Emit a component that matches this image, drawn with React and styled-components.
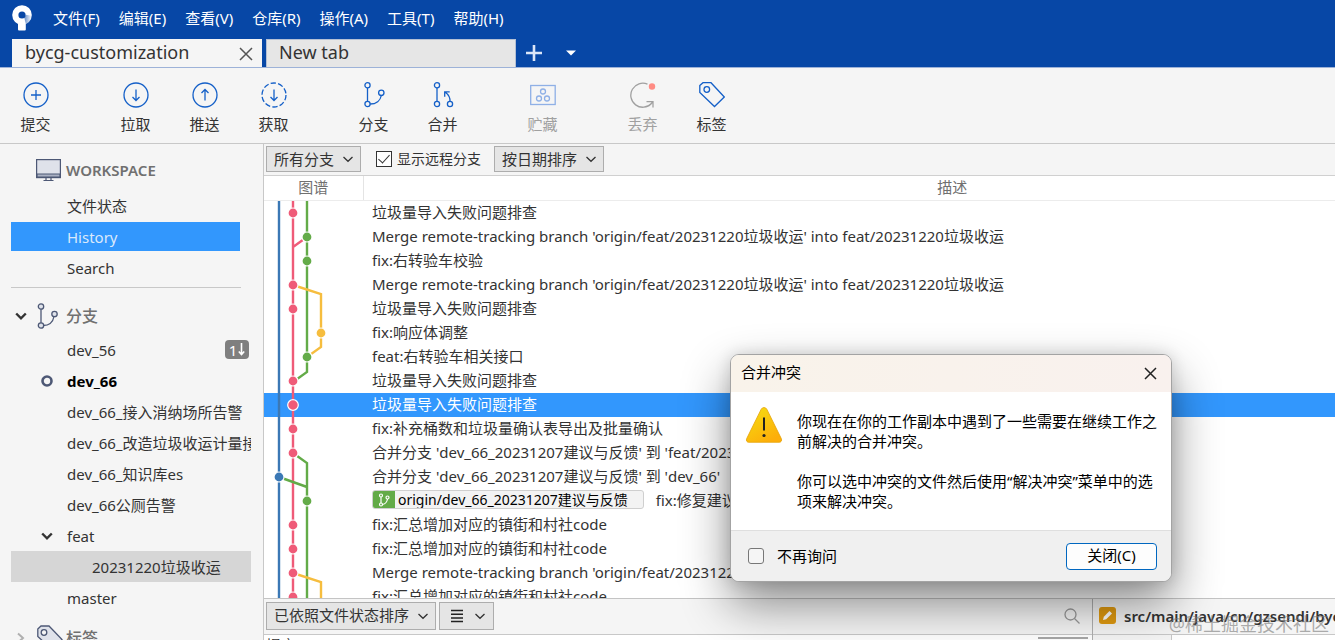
import React from "react";
import styled, { createGlobalStyle, css } from "styled-components";

const GlobalStyle = createGlobalStyle`
  *, *::before, *::after { box-sizing: border-box; }
  body {
    margin: 0;
    background: #f5f5f5;
    color: #333;
    font: 15px/24px "Noto Sans", "Noto Sans CJK SC", sans-serif;
  }
  button, select, input {
    margin: 0;
    font: inherit;
    color: inherit;
  }
  svg { display: block; flex: none; }
`;

const App = styled.div`
  display: flex;
  flex-direction: column;
  height: 100vh;
  overflow: hidden;
  position: relative;
`;

/* ---------- title bar ---------- */

const TitleBar = styled.header`
  flex: none;
  background: #0747a6;
  border-bottom: 1px solid #9db2d8;
`;

const MenuBar = styled.nav`
  display: flex;
  align-items: center;
  height: 36px;
  margin-bottom: 3px;
  padding-left: 12px;
`;

const MenuItems = styled.div`
  display: flex;
  gap: 19px;
  margin-left: 21px;
`;

const PlainButton = styled.button`
  display: flex;
  align-items: center;
  padding: 0;
  border: 0;
  background: none;
  white-space: nowrap;
`;

const MenuButton = styled(PlainButton)`
  color: #fff;
`;

const TabStrip = styled.div`
  display: flex;
  align-items: center;
  gap: 4px;
  height: 28px;
  padding-left: 12px;
`;

const Tab = styled.div`
  display: flex;
  align-items: center;
  justify-content: space-between;
  width: 250px;
  height: 28px;
  padding: 0 8px 0 12px;
  font-size: 18px;
  background: ${(p) => (p.$active ? "#f5f5f5" : "#e6e6e6")};
  border: 1px solid ${(p) => (p.$active ? "#f5f5f5" : "#b4c0d4")};
  border-bottom: 0;
`;

const TabName = styled(PlainButton)`
  padding-bottom: 4px;
`;

const NewTabTools = styled.div`
  display: flex;
  align-items: center;
  gap: 23px;
  margin-left: 5px;
`;

/* ---------- toolbar ---------- */

const ToolBar = styled.div`
  flex: none;
  display: flex;
  gap: 31px;
  height: 76px;
  padding: 12px 0 0 1px;
  border-bottom: 1px solid #c8c8c8;
`;

const ToolGroup = styled.div`
  display: flex;
`;

const Tool = styled(PlainButton)`
  flex-direction: column;
  width: 69px;
  height: 60px;
  gap: 2px;
  color: ${(p) => (p.disabled ? "#a0a0a0" : "#333")};
`;

/* ---------- sidebar ---------- */

const Workspace = styled.div`
  flex: 1;
  display: flex;
  min-height: 0;
`;

const SideBar = styled.aside`
  flex: none;
  width: 264px;
  padding: 6px 12px 0 11px;
  border-right: 1px solid #c8c8c8;
  overflow: hidden;
`;

const SideHeading = styled.h2`
  display: flex;
  align-items: center;
  height: 40px;
  margin: ${(p) => (p.$spaced ? "3px" : "0")} 0 0;
  padding-top: ${(p) => (p.$section ? "3px" : "0")};
  font-size: ${(p) => (p.$section ? "16px" : "15px")};
  font-weight: ${(p) => (p.$section ? 500 : 600)};
  color: #707070;
`;

const HeadToggle = styled.span`
  display: flex;
  width: 26px;
  padding-left: 4px;
`;

const HeadIcon = styled.span`
  display: flex;
  width: ${(p) => (p.$wide ? "55px" : "29px")};
  padding-left: ${(p) => (p.$wide ? "25px" : "0")};
`;

const SideRow = styled.a`
  display: flex;
  align-items: center;
  height: 31px;
  color: ${(p) => (p.$current ? "#000" : "#333")};
  font-weight: ${(p) => (p.$current ? 700 : 400)};
  text-decoration: none;
  white-space: nowrap;
  overflow: hidden;
  padding-left: ${(p) => (p.$deep ? "81px" : "56px")};
  ${(p) =>
    p.$selected &&
    css`
      margin-right: 11px;
      border: solid #f5f5f5;
      border-width: 1px 0;
      background: #3297fd;
      color: #dbe9fb;
    `}
  ${(p) => p.$checked && css`background: #d6d6d6;`}
`;

const RowMarker = styled.span`
  display: flex;
  justify-content: center;
  width: 22px;
  margin: 0 9px 0 -31px;
`;

const Divider = styled.hr`
  height: 1px;
  margin: 4px 10px 6px 0;
  border: 0;
  background: #c8c8c8;
`;

const CountBadge = styled.span`
  display: flex;
  align-items: center;
  justify-content: center;
  gap: 1px;
  width: 24px;
  height: 19px;
  margin: 0 2px 0 auto;
  border-radius: 4px;
  background: #7f7f7f;
  color: #fff;
`;

/* ---------- history ---------- */

const Main = styled.main`
  flex: 1;
  display: flex;
  flex-direction: column;
  min-width: 0;
`;

const FilterBar = styled.div`
  flex: none;
  display: flex;
  align-items: center;
  height: 32px;
  padding: 0 2px 2px;
  border-bottom: 1px solid #d0d0d0;
`;

const SelectBox = styled.span`
  display: flex;
  align-items: center;
  position: relative;
  width: ${(p) => p.$width}px;
  height: ${(p) => (p.$tall ? 28 : 26)}px;
  & > svg {
    position: absolute;
    right: 7px;
    pointer-events: none;
  }
`;

const Select = styled.select`
  appearance: none;
  width: 100%;
  height: 100%;
  padding: 0 20px 1px 7px;
  border: 1px solid #adadad;
  border-radius: 0;
  background: #e5e5e5;
`;

const ListButton = styled.button`
  display: flex;
  align-items: center;
  justify-content: space-between;
  width: 55px;
  height: 28px;
  padding: 0 7px 0 11px;
  border: 1px solid #adadad;
  background: #e5e5e5;
`;

const CheckLabel = styled.label`
  display: flex;
  align-items: center;
  gap: ${(p) => p.$gap}px;
  font-size: ${(p) => (p.$small ? "14px" : "15px")};
  white-space: nowrap;
`;

const CheckBox = styled.input`
  appearance: none;
  display: flex;
  justify-content: center;
  width: 16px;
  height: 16px;
  border: 1px solid ${(p) => (p.$round ? "#777" : "#333")};
  border-radius: ${(p) => (p.$round ? "3px" : "0")};
  background: ${(p) => (p.$round ? "#f5f5f5" : "#fff")};
  &:checked::after {
    content: "";
    width: 6px;
    height: 11px;
    border: solid #333;
    border-width: 0 1px 1px 0;
    transform: rotate(42deg);
  }
`;

const FilterGroup = styled.div`
  display: flex;
  margin: 0 13px 0 15px;
`;

const HistoryPane = styled.div`
  flex: 1;
  min-height: 0;
  overflow: hidden;
  background: #fff;
`;

const HistoryTable = styled.table`
  width: 1278px;
  table-layout: fixed;
  border-collapse: collapse;
`;

const HeadCell = styled.th`
  width: ${(p) => (p.$graph ? "99px" : "auto")};
  height: 24px;
  padding: 0 0 1px;
  line-height: 22px;
  font-weight: 400;
  color: #707070;
  border-bottom: 1px solid #ececec;
  border-right: 1px solid #e4e4e4;
`;

const CommitRow = styled.tr`
  height: 24px;
  background: ${(p) => (p.$selected ? "#3297fd" : "transparent")};
  color: ${(p) => (p.$selected ? "#fff" : "#333")};
`;

const Cell = styled.td`
  height: 24px;
  padding: 0 0 0 ${(p) => (p.$text ? "9px" : "0")};
  white-space: nowrap;
`;

const Message = styled.div`
  display: flex;
  align-items: center;
  height: 24px;
  padding-bottom: 2px;
`;

const BranchTag = styled.span`
  display: flex;
  align-items: center;
  gap: 3px;
  height: 19px;
  margin-right: 12px;
  padding-right: 15px;
  border: 1px solid #cfcfcf;
  border-radius: 3px;
  background: #f3f3f3;
  color: #000;
  font-size: 14px;
  overflow: hidden;
`;

const BranchTagIcon = styled.span`
  display: flex;
  align-items: center;
  justify-content: center;
  width: 22px;
  height: 19px;
  background: #63ab48;
`;

/* ---------- file panes ---------- */

const FilePanes = styled.section`
  flex: none;
  display: flex;
  height: 42px;
  border-top: 1px solid #c4c4c4;
`;

const FilePane = styled.div`
  display: flex;
  flex-direction: column;
  min-width: 0;
  flex: ${(p) => (p.$right ? "none" : "1")};
  width: ${(p) => (p.$right ? "243px" : "auto")};
  border-left: ${(p) => (p.$right ? "1px solid #b0b0b0" : "0")};
  overflow: hidden;
`;

const FileBar = styled.div`
  flex: none;
  display: flex;
  align-items: center;
  gap: ${(p) => (p.$right ? "8px" : "3px")};
  height: 36px;
  padding: 0 2px 2px ${(p) => (p.$right ? "6px" : "2px")};
  border-bottom: 1px solid #c8c8c8;
  white-space: nowrap;
`;

const SearchButton = styled(PlainButton)`
  margin: 0 10px 0 auto;
`;

const FilePath = styled.strong`
  font-weight: 600;
`;

const FileBody = styled.div`
  display: flex;
  justify-content: space-between;
  padding: 0 4px 0 2px;
  line-height: 20px;
  background: #fff;
`;

const ScrollThumb = styled.span`
  width: 50px;
  height: 2px;
  margin-top: 2px;
  background: #a8a8a8;
`;

const DiffGutter = styled.div`
  width: 79px;
  background: #f5f5f5;
  border-right: 1px solid #c8c8c8;
`;

const DiffBody = styled.div`
  flex: 1;
  display: flex;
  background: #fff;
`;

const Watermark = styled.span`
  position: absolute;
  right: 6px;
  bottom: 4px;
  font-size: 18px;
  line-height: 24px;
  color: rgba(120, 120, 120, 0.6);
  white-space: nowrap;
`;

/* ---------- dialog ---------- */

const Dialog = styled.div`
  position: absolute;
  left: 730px;
  top: 354px;
  width: 442px;
  border: 1px solid #a3a3a3;
  border-radius: 9px;
  background: #fff;
  color: #000;
  box-shadow: 0 22px 48px rgba(0, 0, 0, 0.45), 0 0 16px rgba(0, 0, 0, 0.14);
  overflow: hidden;
`;

const DialogTitle = styled.div`
  display: flex;
  align-items: center;
  justify-content: space-between;
  height: 37px;
  padding: 0 14px 0 10px;
  background: linear-gradient(90deg, #f9f3ea, #f9f1ee);
`;

const DialogHeading = styled.h1`
  margin: 0;
  padding-bottom: 3px;
  font-size: 15px;
  font-weight: 400;
`;

const DialogBody = styled.div`
  display: flex;
  gap: 14px;
  height: 138px;
  padding: 14px 12px 0 14px;
`;

const DialogText = styled.div`
  padding-top: 5px;
  line-height: 20px;
  p { margin: 0 0 20px; }
`;

const DialogFoot = styled.div`
  display: flex;
  align-items: center;
  justify-content: space-between;
  height: 51px;
  padding: 0 14px 0 17px;
  border-top: 1px solid #dfdfdf;
  background: #f0f0f0;
`;

const CloseButton = styled.button`
  width: 91px;
  height: 27px;
  padding: 0 0 2px;
  border: 1px solid #0067c0;
  border-radius: 4px;
  background: #fdfdfd;
  line-height: 22px;
`;

/* ---------- icons ---------- */

const BLUE = "#1560c8";

const Stroke = ({ w, h, color = BLUE, width = 1.3, children, ...rest }) => (
  <svg width={w} height={h} viewBox={`0 0 ${w} ${h}`} fill="none" stroke={color} strokeWidth={width} {...rest}>
    {children}
  </svg>
);

const Logo = () => (
  <svg width="20" height="26" viewBox="0 0 20 26">
    <defs>
      <linearGradient id="logoShade" x1="0" y1="0" x2="1" y2="0">
        <stop offset="0" stopColor="#0747a6" stopOpacity="0.6" />
        <stop offset="1" stopColor="#0747a6" stopOpacity="0" />
      </linearGradient>
    </defs>
    <path d="M6 15h7.800v9.500a1 1 0 0 1-1 1H7a1 1 0 0 1-1-1z" fill="#fff" />
    <circle cx="10" cy="10" r="6.700" fill="none" stroke="#fff" strokeWidth="6.200" />
    <path d="M12.300 12.800l1.500-3l6 1a10 10 0 0 1-6 8.200z" fill="url(#logoShade)" />
  </svg>
);

const CloseIcon = ({ color, size }) => (
  <Stroke w={size} h={size} color={color} width={1.5}>
    <path d={`M1 1L${size - 1} ${size - 1}M${size - 1} 1L1 ${size - 1}`} />
  </Stroke>
);

const Chevron = ({ bold }) => (
  <Stroke w={12} h={12} color="#333" width={bold ? 2.4 : 1.3}>
    <path d={bold ? "M1.200 3.500L6 8.300l4.800-4.800" : "M1.500 4L6 8.300L10.500 4"} />
  </Stroke>
);

const ToolIcons = {
  commit: (
    <Stroke w={26} h={30}>
      <circle cx="13" cy="15" r="12" />
      <path d="M13 10v10M8 15h10" />
    </Stroke>
  ),
  pull: (
    <Stroke w={26} h={30}>
      <circle cx="13" cy="15" r="12" />
      <path d="M13 9.500v11M9.500 17l3.500 3.500l3.500-3.500" />
    </Stroke>
  ),
  push: (
    <Stroke w={26} h={30}>
      <circle cx="13" cy="15" r="12" />
      <path d="M13 20.500v-11M9.500 13l3.500-3.500l3.500 3.500" />
    </Stroke>
  ),
  fetch: (
    <Stroke w={26} h={30}>
      <circle cx="13" cy="15" r="12" strokeDasharray="5.400 2.140" />
      <path d="M13 9.500v11M9.500 17l3.500 3.500l3.500-3.500" />
    </Stroke>
  ),
  branch: (
    <Stroke w={26} h={30}>
      <circle cx="6.500" cy="5.300" r="2.600" />
      <circle cx="6.500" cy="24" r="2.600" />
      <circle cx="20.300" cy="12.800" r="2.700" />
      <path d="M6.500 7.900v13.500M9.100 24c6.200 0 10.300-3.500 11.200-8.500" />
    </Stroke>
  ),
  merge: (
    <Stroke w={26} h={30}>
      <circle cx="7" cy="5.300" r="2.600" />
      <circle cx="7" cy="24" r="2.600" />
      <circle cx="20" cy="24" r="2.600" />
      <path d="M7 7.900v13.500M20 21.400c.2-4-1.300-6.800-4.700-9.200M14.700 16.800v-4.900h5" />
    </Stroke>
  ),
  stash: (
    <Stroke w={26} h={30} color="#8fb0e6">
      <rect x="0.700" y="5.500" width="24.500" height="19" />
      <circle cx="13" cy="11.500" r="2.500" />
      <circle cx="9" cy="18.500" r="2.500" />
      <circle cx="17" cy="18.500" r="2.500" />
    </Stroke>
  ),
  discard: (
    <Stroke w={26} h={30} color="#a0a0a0">
      <path d="M17.500 4.200A12 12 0 1 0 21.500 23.500M16.500 21.700h6.500v5.800M23 21.700l-4 4" />
      <circle cx="22" cy="6.500" r="3.200" fill="#ff8c84" stroke="none" />
    </Stroke>
  ),
  tag: (
    <Stroke w={26} h={30}>
      <path d="M.8 5.500L4 2.700h8L25.300 17L15.500 26.500L.8 12.500z" />
      <circle cx="7.800" cy="9.500" r="2.800" />
    </Stroke>
  ),
};

const SideBranchIcon = () => (
  <Stroke w={22} h={26} color="#4d5875">
    <path d="M4 5.500v15M6 22.500c6 0 10-3.500 11-9" />
    <circle cx="4" cy="3.500" r="2.700" fill="#dfe2ea" />
    <circle cx="4" cy="22.500" r="2.700" fill="#dfe2ea" />
    <circle cx="17.500" cy="11" r="2.700" fill="#dfe2ea" />
  </Stroke>
);

const MonitorIcon = () => (
  <Stroke w={25} h={24} color="#4d5875" width={1.2}>
    <rect x="0.600" y="1.600" width="23.800" height="18" fill="#dfe2ea" />
    <path d="M1 16h23v3H1z" fill="#a9b0c2" />
    <path d="M10 20v2M15 20v2M7.500 22.500h10" />
  </Stroke>
);

const SideTagIcon = () => (
  <Stroke w={26} h={28} color="#4d5875">
    <path d="M.8 5L4 2h8l13 13.500L15.500 26L.8 12.500z" fill="#dfe2ea" />
    <circle cx="7" cy="8.500" r="2.800" fill="#f5f5f5" />
  </Stroke>
);

const WarningIcon = () => (
  <svg width="38" height="38" viewBox="0 0 38 38">
    <defs>
      <linearGradient id="warn" x1="0" y1="0" x2="0.600" y2="1">
        <stop offset="0" stopColor="#f5e010" />
        <stop offset="1" stopColor="#fdae0a" />
      </linearGradient>
    </defs>
    <path
      d="M16.200 3.200a3.200 3.200 0 0 1 5.600 0L36.300 32.600c.9 1.800-.2 3.700-2.200 3.700H3.900c-2 0-3.100-1.900-2.200-3.700z"
      fill="url(#warn)"
      stroke="#e6a30a"
      strokeWidth="0.800"
    />
    <path d="M19 11.500v13" stroke="#222" strokeWidth="2" />
    <circle cx="19" cy="29.500" r="1.600" fill="#222" />
  </svg>
);

/* ---------- commit graph ---------- */

const ROW = 24;
const LANES = [15, 29, 43, 57];
const COLORS = ["#3b78b5", "#ef5b78", "#63ab48", "#f6bd3e"];

const LINES = [
  [0, "M15 0V408"],
  [1, "M29 0V408M29 46L43 36"],
  [2, "M43 0V171L29 181"],
  [3, "M29 84L57 93V146L43 156"],
  [2, "M29 252L43 262V408M15 276L43 286"],
  [3, "M29 372L57 381V408"],
];

const Graph = ({ index, lane, selected }) => (
  <svg width="99" height={ROW} viewBox={`0 ${index * ROW} 99 ${ROW}`} fill="none">
    {LINES.map(([c, d]) => (
      <path key={d} d={d} stroke={COLORS[c]} strokeWidth="2.400" />
    ))}
    <circle
      cx={LANES[lane]}
      cy={index * ROW + 12}
      r={selected ? 5.300 : 5}
      fill={COLORS[lane]}
      stroke="#fff"
      strokeWidth="1.200"
    />
  </svg>
);

const FEAT = "'origin/feat/20231220垃圾收运' into feat/20231220垃圾收运";

const COMMITS = [
  [1, "垃圾量导入失败问题排查"],
  [2, "Merge remote-tracking branch " + FEAT],
  [2, "fix:右转验车校验"],
  [1, "Merge remote-tracking branch " + FEAT],
  [1, "垃圾量导入失败问题排查"],
  [3, "fix:响应体调整"],
  [2, "feat:右转验车相关接口"],
  [1, "垃圾量导入失败问题排查"],
  [1, "垃圾量导入失败问题排查"],
  [1, "fix:补充桶数和垃圾量确认表导出及批量确认"],
  [1, "合并分支 'dev_66_20231207建议与反馈' 到 'feat/20231220垃圾收运'"],
  [0, "合并分支 'dev_66_20231207建议与反馈' 到 'dev_66'"],
  [2, "fix:修复建议与反馈", "origin/dev_66_20231207建议与反馈"],
  [1, "fix:汇总增加对应的镇街和村社code"],
  [1, "fix:汇总增加对应的镇街和村社code"],
  [1, "Merge remote-tracking branch " + FEAT],
  [1, "fix:汇总增加对应的镇街和村社code"],
];
const SELECTED = 8;

const MENUS = ["文件(F)", "编辑(E)", "查看(V)", "仓库(R)", "操作(A)", "工具(T)", "帮助(H)"];

const TOOLS = [
  [["commit", "提交"]],
  [["pull", "拉取"], ["push", "推送"], ["fetch", "获取"]],
  [["branch", "分支"], ["merge", "合并"]],
  [["stash", "贮藏", true]],
  [["discard", "丢弃", true], ["tag", "标签"]],
];

const DropDown = ({ label, text, width, tall }) => (
  <SelectBox $width={width} $tall={tall}>
    <Select aria-label={label}>
      <option>{text}</option>
    </Select>
    <Chevron />
  </SelectBox>
);

export default function SourceTree() {
  return (
    <App>
      <GlobalStyle />
      <TitleBar>
        <MenuBar>
          <Logo />
          <MenuItems>
            {MENUS.map((m) => (
              <MenuButton key={m}>{m}</MenuButton>
            ))}
          </MenuItems>
        </MenuBar>
        <TabStrip>
          <Tab $active>
            <TabName>bycg-customization</TabName>
            <PlainButton aria-label="关闭标签页">
              <CloseIcon size={14} color="#555" />
            </PlainButton>
          </Tab>
          <Tab>
            <TabName>New tab</TabName>
          </Tab>
          <NewTabTools>
            <PlainButton aria-label="新建标签页">
              <Stroke w={18} h={18} color="#dbe6f8" width={2.6}>
                <path d="M9 1v16M1 9h16" />
              </Stroke>
            </PlainButton>
            <PlainButton aria-label="标签页列表">
              <svg width="10" height="6" viewBox="0 0 10 6">
                <path d="M0 0.500h10L5 5.500z" fill="#fff" />
              </svg>
            </PlainButton>
          </NewTabTools>
        </TabStrip>
      </TitleBar>

      <ToolBar>
        {TOOLS.map((group) => (
          <ToolGroup key={group[0][0]}>
            {group.map(([icon, text, off]) => (
              <Tool key={icon} disabled={off}>
                {ToolIcons[icon]}
                {text}
              </Tool>
            ))}
          </ToolGroup>
        ))}
      </ToolBar>

      <Workspace>
        <SideBar>
          <SideHeading>
            <HeadIcon $wide>
              <MonitorIcon />
            </HeadIcon>
            WORKSPACE
          </SideHeading>
          <SideRow href="#status">文件状态</SideRow>
          <SideRow href="#history" $selected>History</SideRow>
          <SideRow href="#search">Search</SideRow>
          <Divider />
          <SideHeading $section>
            <HeadToggle>
              <Chevron bold />
            </HeadToggle>
            <HeadIcon>
              <SideBranchIcon />
            </HeadIcon>
            分支
          </SideHeading>
          <SideRow href="#dev_56">
            dev_56
            <CountBadge>
              1
              <Stroke w={7} h={13} color="#fff" width={1.6}>
                <path d="M3.500 0v11.500M.8 8.500l2.700 3l2.700-3" />
              </Stroke>
            </CountBadge>
          </SideRow>
          <SideRow href="#dev_66" $current>
            <RowMarker>
              <Stroke w={12} h={12} color="#4d5875" width={2.6}>
                <circle cx="6" cy="6" r="4.500" />
              </Stroke>
            </RowMarker>
            dev_66
          </SideRow>
          <SideRow href="#dev_66_1">dev_66_接入消纳场所告警</SideRow>
          <SideRow href="#dev_66_2">dev_66_改造垃圾收运计量接口</SideRow>
          <SideRow href="#dev_66_3">dev_66_知识库es</SideRow>
          <SideRow href="#dev_66_4">dev_66公厕告警</SideRow>
          <SideRow href="#feat">
            <RowMarker>
              <Chevron bold />
            </RowMarker>
            feat
          </SideRow>
          <SideRow href="#feat_20231220" $deep $checked>20231220垃圾收运</SideRow>
          <SideRow href="#master">master</SideRow>
          <SideHeading $section $spaced>
            <HeadToggle>
              <Stroke w={10} h={12} color="#b0b0b0" width={2}>
                <path d="M3 1.500L8 6L3 10.500" />
              </Stroke>
            </HeadToggle>
            <HeadIcon>
              <SideTagIcon />
            </HeadIcon>
            标签
          </SideHeading>
        </SideBar>

        <Main>
          <FilterBar>
            <DropDown label="分支范围" text="所有分支" width={95} />
            <FilterGroup>
              <CheckLabel $gap={5} $small>
                <CheckBox type="checkbox" defaultChecked />
                显示远程分支
              </CheckLabel>
            </FilterGroup>
            <DropDown label="排序方式" text="按日期排序" width={110} />
          </FilterBar>

          <HistoryPane>
            <HistoryTable>
              <thead>
                <tr>
                  <HeadCell $graph>图谱</HeadCell>
                  <HeadCell>描述</HeadCell>
                </tr>
              </thead>
              <tbody>
                {COMMITS.map(([lane, text, tag], i) => (
                  <CommitRow key={i} $selected={i === SELECTED}>
                    <Cell>
                      <Graph index={i} lane={lane} selected={i === SELECTED} />
                    </Cell>
                    <Cell $text>
                      <Message>
                        {tag && (
                          <BranchTag>
                            <BranchTagIcon>
                              <Stroke w={12} h={14} color="#fff" width={1.2}>
                                <circle cx="3" cy="2.500" r="1.500" />
                                <circle cx="3" cy="11.500" r="1.500" />
                                <circle cx="9.500" cy="4.500" r="1.500" />
                                <path d="M3 4v6M4.500 11.500c3-.5 4.500-2.500 5-5.500" />
                              </Stroke>
                            </BranchTagIcon>
                            {tag}
                          </BranchTag>
                        )}
                        {text}
                      </Message>
                    </Cell>
                  </CommitRow>
                ))}
              </tbody>
            </HistoryTable>
          </HistoryPane>

          <FilePanes>
            <FilePane>
              <FileBar>
                <DropDown label="文件排序" text="已依照文件状态排序" width={170} tall />
                <ListButton aria-label="视图" aria-haspopup="menu">
                  <Stroke w={12} h={14} color="#222" width={1.5}>
                    <path d="M0 1.500h12M0 5.200h12M0 8.900h12M0 12.600h12" />
                  </Stroke>
                  <Chevron />
                </ListButton>
                <SearchButton aria-label="搜索">
                  <Stroke w={16} h={16} color="#999">
                    <circle cx="6.500" cy="6.500" r="5.500" />
                    <path d="M10.500 10.500l5 5" />
                  </Stroke>
                </SearchButton>
              </FileBar>
              <FileBody>
                提交:
                <ScrollThumb />
              </FileBody>
            </FilePane>
            <FilePane $right>
              <FileBar $right>
                <svg width="17" height="17" viewBox="0 0 17 17">
                  <rect width="17" height="17" rx="3" fill="#e09a10" />
                  <path d="M4 13l.8-3.200L10.500 4l2.500 2.500L7.200 12.200z" fill="#fff" />
                </svg>
                <FilePath>src/main/java/cn/gzsendi/bycg/</FilePath>
              </FileBar>
              <DiffBody>
                <DiffGutter />
              </DiffBody>
            </FilePane>
          </FilePanes>
        </Main>
      </Workspace>

      <Dialog role="dialog" aria-labelledby="conflict-title">
        <DialogTitle>
          <DialogHeading id="conflict-title">合并冲突</DialogHeading>
          <PlainButton aria-label="关闭">
            <CloseIcon size={13} color="#222" />
          </PlainButton>
        </DialogTitle>
        <DialogBody>
          <WarningIcon />
          <DialogText>
            <p>你现在在你的工作副本中遇到了一些需要在继续工作之前解决的合并冲突。</p>
            <p>你可以选中冲突的文件然后使用“解决冲突”菜单中的选项来解决冲突。</p>
          </DialogText>
        </DialogBody>
        <DialogFoot>
          <CheckLabel $gap={13}>
            <CheckBox type="checkbox" $round />
            不再询问
          </CheckLabel>
          <CloseButton>关闭(C)</CloseButton>
        </DialogFoot>
      </Dialog>
      <Watermark>@稀土掘金技术社区</Watermark>
    </App>
  );
}
